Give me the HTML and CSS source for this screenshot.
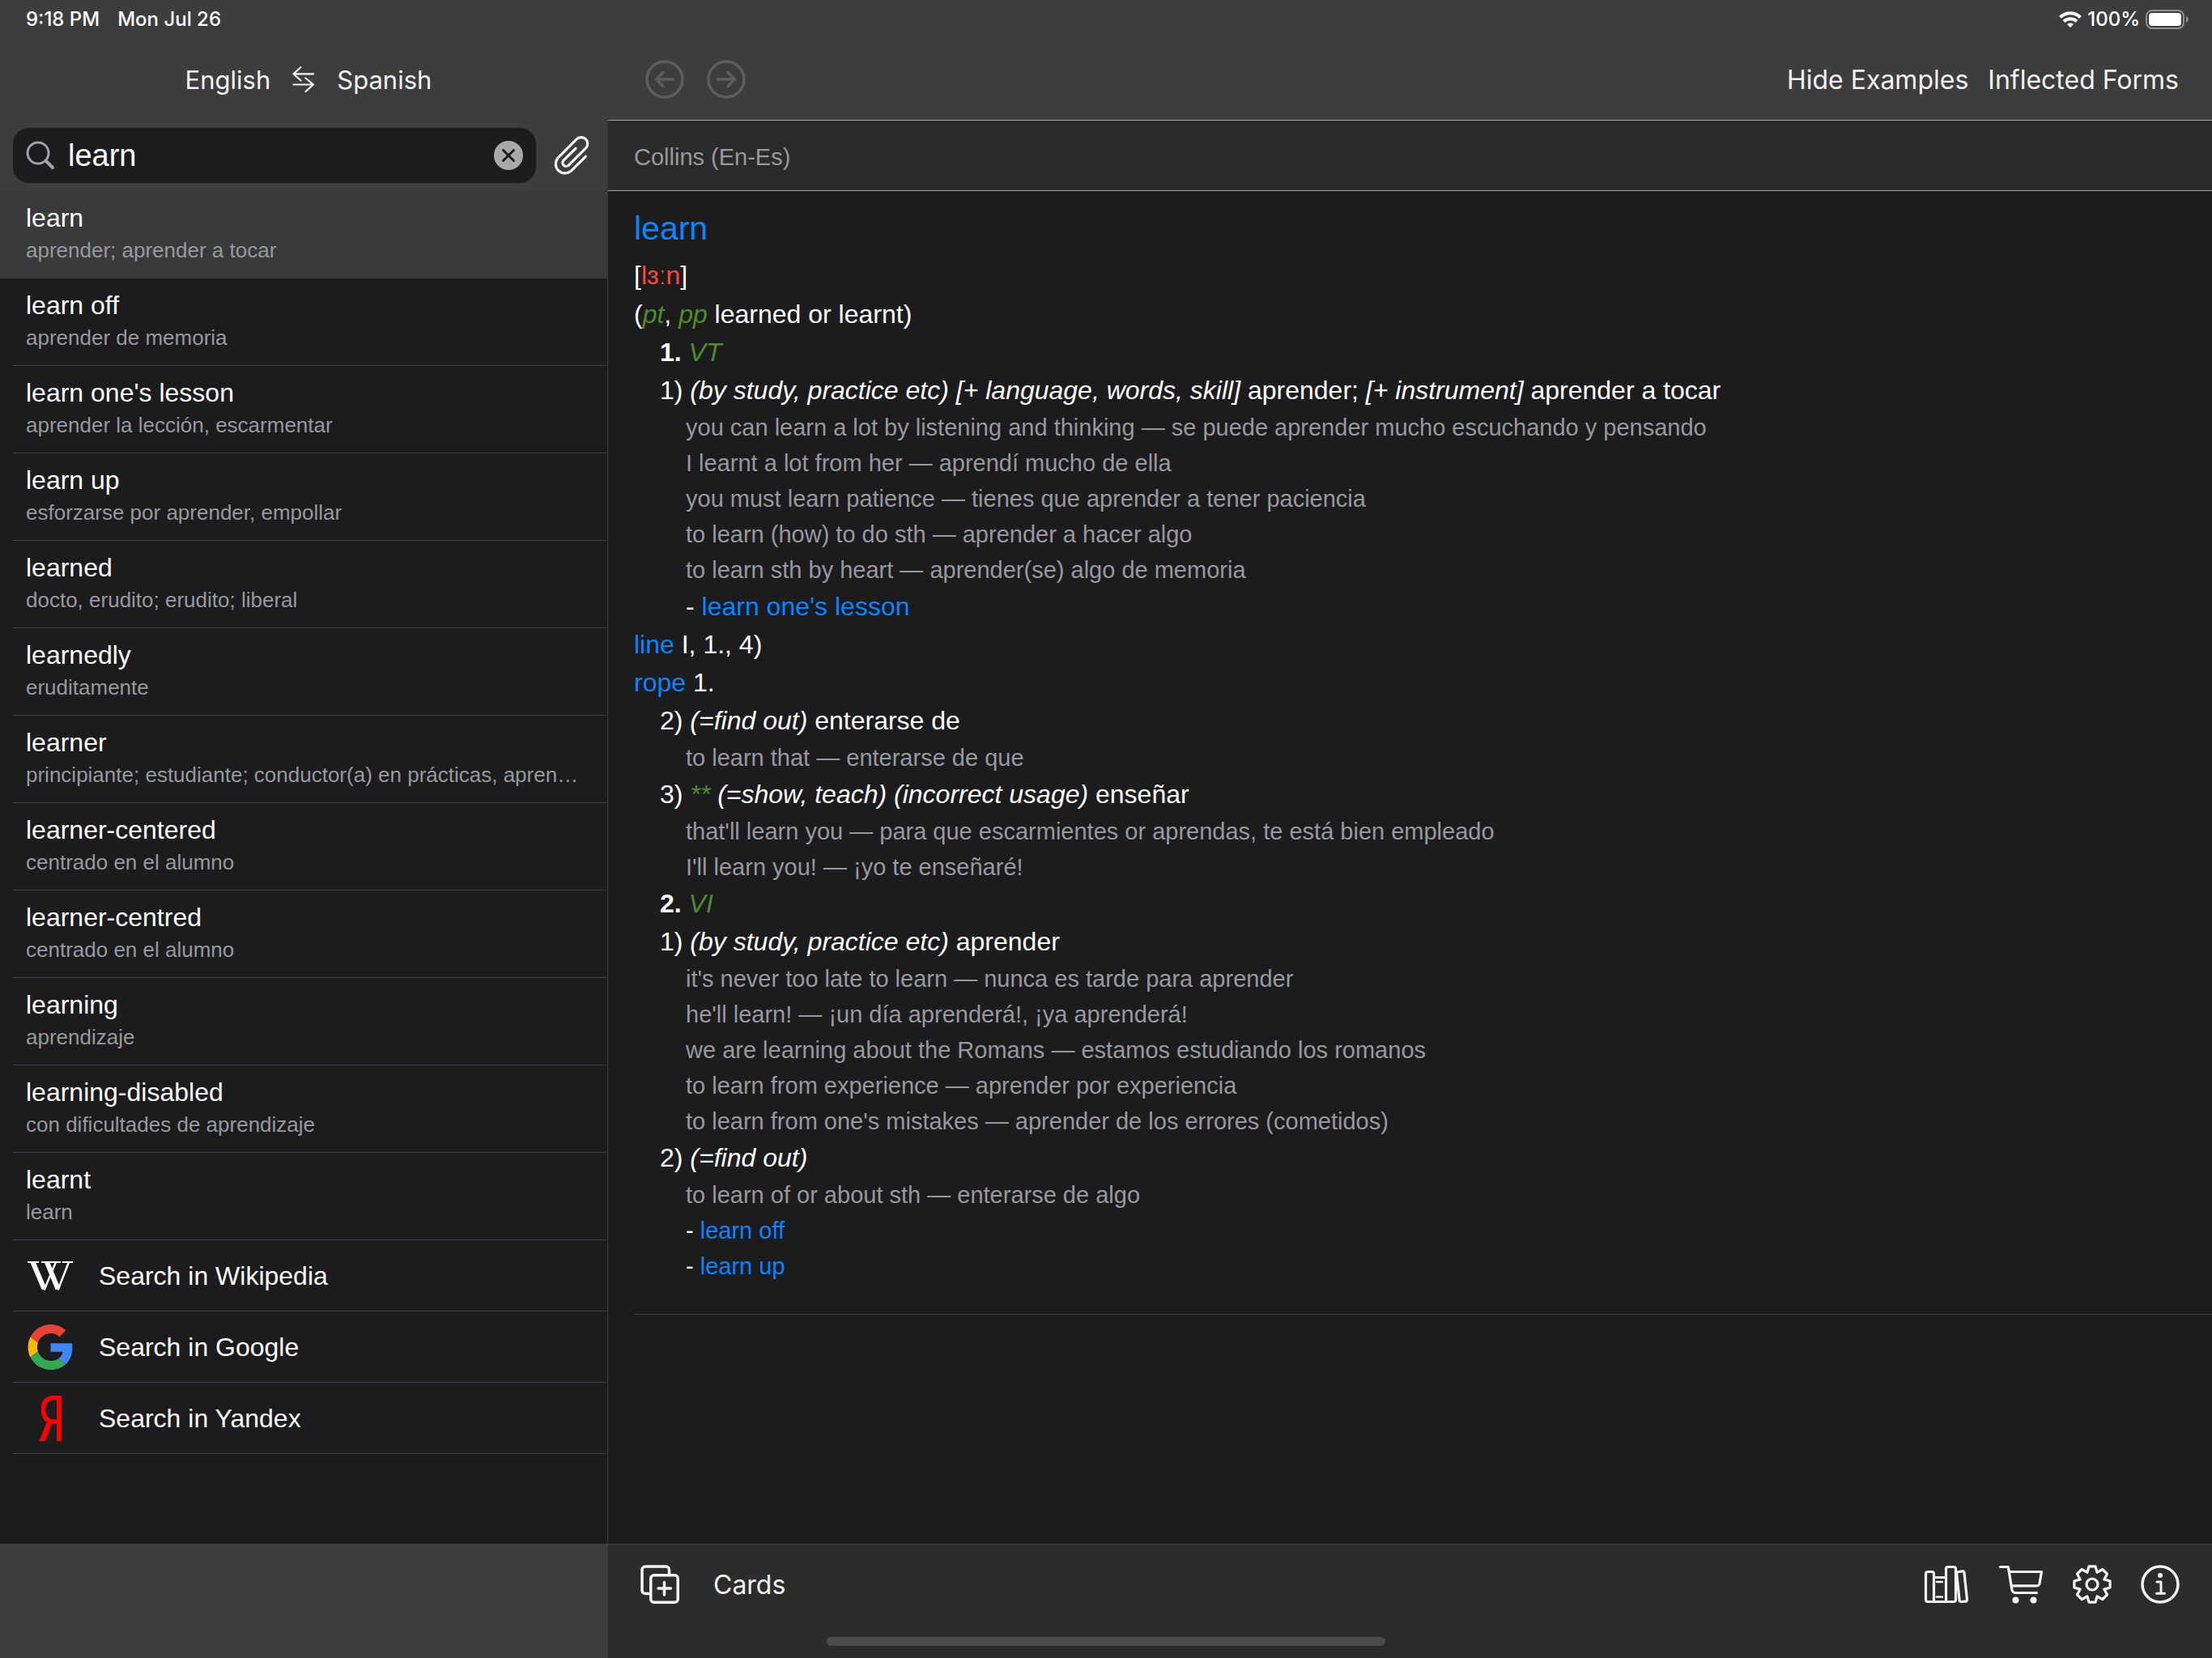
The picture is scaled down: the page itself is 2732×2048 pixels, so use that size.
FILE: index.html
```html
<!DOCTYPE html>
<html lang="en">
<head>
<meta charset="utf-8">
<meta name="viewport" content="width=device-width, initial-scale=1">
<title>learn – English Spanish Dictionary</title>
<link rel="stylesheet" href="styles.css">
</head>
<body>
<div class="app">
  <aside class="sidebar">
    <header class="side-head">
      <div class="status"><span>9:18 PM</span><span>Mon Jul 26</span></div>
      <div class="languages">
        <button class="text-btn" type="button">English</button>
        <button class="icon-btn" type="button" aria-label="Swap languages">
          <svg width="28" height="32" viewBox="0 0 28 32" fill="none" stroke="currentColor" stroke-width="2.2" stroke-linecap="round" stroke-linejoin="round"><path d="M26 9.300H1.500M10.500 1L1.500 9.300L10.500 17.500M1.500 22.500H26M16.500 14.500L26 22.500L16.500 31"/></svg>
        </button>
        <button class="text-btn" type="button">Spanish</button>
      </div>
      <form class="search-row">
        <div class="search-box">
          <svg width="36" height="36" viewBox="0 0 36 36" fill="none" stroke="#a2a2a6" stroke-width="3" stroke-linecap="round"><circle cx="15" cy="15" r="13"/><path d="M24.500 24.500L33 33" stroke-width="4"/></svg>
          <input class="search-input" type="text" value="learn" aria-label="Search word">
          <button class="icon-btn" type="button" aria-label="Clear">
            <svg width="36" height="36" viewBox="0 0 36 36"><circle cx="18" cy="18" r="18" fill="#a9a9a9"/><path d="M11.500 11.500l13 13M24.500 11.500l-13 13" stroke="#1c1c1e" stroke-width="3" stroke-linecap="round"/></svg>
          </button>
        </div>
        <button class="icon-btn" type="button" aria-label="Paste from clipboard">
          <svg width="44" height="48" viewBox="0 0 44 48" fill="none" stroke="currentColor" stroke-width="3.200" stroke-linecap="round" stroke-linejoin="round"><path d="M39.300 25.300L21.200 43.300A11.500 11.500 0 0 1 5 27.100L28.200 3.900A7.900 7.900 0 0 1 39.400 15.100L18.100 36.400A4.400 4.400 0 0 1 11.900 30.200L27 15.300"/></svg>
        </button>
      </form>
    </header>

    <nav class="results" aria-label="Results">
      <a class="entry selected" href="#learn"><span class="word">learn</span><span class="gloss">aprender; aprender a tocar</span></a>
      <a class="entry" href="#learn-off"><span class="word">learn off</span><span class="gloss">aprender de memoria</span></a>
      <a class="entry" href="#lesson"><span class="word">learn one's lesson</span><span class="gloss">aprender la lección, escarmentar</span></a>
      <a class="entry" href="#learn-up"><span class="word">learn up</span><span class="gloss">esforzarse por aprender, empollar</span></a>
      <a class="entry" href="#learned"><span class="word">learned</span><span class="gloss">docto, erudito; erudito; liberal</span></a>
      <a class="entry" href="#learnedly"><span class="word">learnedly</span><span class="gloss">eruditamente</span></a>
      <a class="entry" href="#learner"><span class="word">learner</span><span class="gloss">principiante; estudiante; conductor(a) en prácticas, apren…</span></a>
      <a class="entry" href="#learner-centered"><span class="word">learner-centered</span><span class="gloss">centrado en el alumno</span></a>
      <a class="entry" href="#learner-centred"><span class="word">learner-centred</span><span class="gloss">centrado en el alumno</span></a>
      <a class="entry" href="#learning"><span class="word">learning</span><span class="gloss">aprendizaje</span></a>
      <a class="entry" href="#learning-disabled"><span class="word">learning-disabled</span><span class="gloss">con dificultades de aprendizaje</span></a>
      <a class="entry" href="#learnt"><span class="word">learnt</span><span class="gloss">learn</span></a>
      <a class="web" href="#wikipedia">
        <svg width="56" height="56" viewBox="0 0 56 56" fill="none" stroke="#fff"><path d="M6.500 11L20.500 44M24 11L37.500 44" stroke-width="6"/><path d="M20.500 45.500L35 11M37.500 45.500L51 11" stroke-width="2.500"/><path d="M0 11h14M17 11h14M31 11h10M43 11h13" stroke-width="2"/></svg>
        <span>Search in Wikipedia</span>
      </a>
      <a class="web" href="#google">
        <svg width="56" height="56" viewBox="-0.5 0 48 48"><path fill="#ea4335" d="M24 9.500c3.540 0 6.710 1.220 9.210 3.600l6.850-6.850C35.900 2.380 30.470 0 24 0 14.620 0 6.510 5.380 2.560 13.220l7.980 6.190C12.430 13.720 17.740 9.500 24 9.500z"/><path fill="#4285f4" d="M46.980 24.550c0-1.570-.150-3.090-.380-4.550H24v9.020h12.940c-.580 2.960-2.260 5.480-4.780 7.180l7.730 6c4.510-4.180 7.090-10.360 7.090-17.650z"/><path fill="#fbbc05" d="M10.530 28.590c-.480-1.450-.760-2.990-.760-4.590s.270-3.140.760-4.590l-7.980-6.190C.920 16.460 0 20.120 0 24c0 3.880.920 7.540 2.560 10.780l7.970-6.190z"/><path fill="#34a853" d="M24 48c6.480 0 11.930-2.130 15.890-5.810l-7.730-6c-2.150 1.450-4.920 2.300-8.160 2.300-6.260 0-11.570-4.220-13.470-9.910l-7.980 6.190C6.510 42.620 14.620 48 24 48z"/></svg>
        <span>Search in Google</span>
      </a>
      <a class="web" href="#yandex">
        <svg width="56" height="56" viewBox="0 0 56 56" fill="none" stroke="#f00"><path d="M39 0V56" stroke-width="6"/><path d="M39 2.500H33C23 2.500 19.500 8.500 19.500 17S23 32 33 32H39" stroke-width="5.500"/><path d="M24.500 31l6 3L21.700 56h-7.400z" fill="#f00" stroke="none"/></svg>
        <span>Search in Yandex</span>
      </a>
    </nav>
    <div class="side-foot"></div>
  </aside>

  <main class="main">
    <header class="main-head">
      <div class="status right">
        <svg width="28" height="20" viewBox="0 0 28 20" fill="none" stroke="#fff" stroke-width="4"><path d="M1.500 7.500C8.500.500 19.500.500 26.500 7.500M6 12.500c4.500-4.300 11.500-4.300 16 0"/><path fill="#fff" stroke="none" d="M14 20l-4-4c2-2 6-2 8 0z"/></svg>
        <span>100%</span>
        <svg width="54" height="26" viewBox="0 0 54 26"><rect x="1" y="2" width="46" height="22" rx="7" fill="none" stroke="#8f8f8f" stroke-width="2"/><rect x="4" y="5" width="40" height="16" rx="4" fill="#fff"/><path d="M50 9q3 1.500 3 4t-3 4z" fill="#8f8f8f"/></svg>
      </div>
      <div class="toolbar">
        <div class="history">
          <button class="icon-btn" type="button" aria-label="Back" disabled>
            <svg width="48" height="48" viewBox="0 0 48 48" fill="none" stroke="#5d5d5d" stroke-width="3.500" stroke-linecap="round" stroke-linejoin="round"><circle cx="24" cy="24" r="22"/><path d="M34.500 24H14M22 15.500L13.500 24l8.500 8.500"/></svg>
          </button>
          <button class="icon-btn" type="button" aria-label="Forward" disabled>
            <svg width="48" height="48" viewBox="0 0 48 48" fill="none" stroke="#5d5d5d" stroke-width="3.500" stroke-linecap="round" stroke-linejoin="round"><circle cx="24" cy="24" r="22"/><path d="M13.500 24H34M26 15.500l8.500 8.500-8.500 8.500"/></svg>
          </button>
        </div>
        <div class="actions">
          <button class="text-btn" type="button">Hide Examples</button>
          <button class="text-btn" type="button">Inflected Forms</button>
        </div>
      </div>
    </header>
    <div class="source">Collins (En-Es)</div>

    <div class="content">
      <article class="article">
        <h1 class="headword">learn</h1>
        <p class="line pron">[<span class="ipa">lɜːn</span>]</p>
        <p class="line">(<i class="gram">pt</i>, <i class="gram">pp</i> learned or learnt)</p>
        <p class="line in1"><b>1.</b> <i class="gram">VT</i></p>
        <p class="line in1">1) <i>(by study, practice etc) [+ language, words, skill]</i> aprender; <i>[+ instrument]</i> aprender a tocar</p>
        <p class="example">you can learn a lot by listening and thinking — se puede aprender mucho escuchando y pensando</p>
        <p class="example">I learnt a lot from her — aprendí mucho de ella</p>
        <p class="example">you must learn patience — tienes que aprender a tener paciencia</p>
        <p class="example">to learn (how) to do sth — aprender a hacer algo</p>
        <p class="example">to learn sth by heart — aprender(se) algo de memoria</p>
        <p class="line in2">- <a href="#lesson">learn one's lesson</a></p>
        <p class="line"><a href="#line">line</a> I, 1., 4)</p>
        <p class="line"><a href="#rope">rope</a> 1.</p>
        <p class="line in1">2) <i>(=find out)</i> enterarse de</p>
        <p class="example">to learn that — enterarse de que</p>
        <p class="line in1">3) <i class="gram">**</i> <i>(=show, teach) (incorrect usage)</i> enseñar</p>
        <p class="example">that'll learn you — para que escarmientes or aprendas, te está bien empleado</p>
        <p class="example">I'll learn you! — ¡yo te enseñaré!</p>
        <p class="line in1"><b>2.</b> <i class="gram">VI</i></p>
        <p class="line in1">1) <i>(by study, practice etc)</i> aprender</p>
        <p class="example">it's never too late to learn — nunca es tarde para aprender</p>
        <p class="example">he'll learn! — ¡un día aprenderá!, ¡ya aprenderá!</p>
        <p class="example">we are learning about the Romans — estamos estudiando los romanos</p>
        <p class="example">to learn from experience — aprender por experiencia</p>
        <p class="example">to learn from one's mistakes — aprender de los errores (cometidos)</p>
        <p class="line in1">2) <i>(=find out)</i></p>
        <p class="example">to learn of or about sth — enterarse de algo</p>
        <p class="example phrasal">- <a href="#learn-off">learn off</a></p>
        <p class="example phrasal">- <a href="#learn-up">learn up</a></p>
      </article>
    </div>

    <footer class="main-foot">
      <button class="cards" type="button">
        <svg width="48" height="48" viewBox="0 0 48 48" fill="none" stroke="currentColor" stroke-width="3.500" stroke-linecap="round" stroke-linejoin="round"><rect x="12.750" y="12.750" width="33.500" height="33.500" rx="4"/><path d="M35.500 12V6a4 4 0 0 0-4-4H6a4 4 0 0 0-4 4v25.500a4 4 0 0 0 4 4h6M29.500 21.500v15.500M22 29h15.500"/></svg>
        <span>Cards</span>
      </button>
      <div class="tools">
        <button class="icon-btn" type="button" aria-label="Dictionaries">
          <svg width="56" height="48" viewBox="-1 0 56 48" fill="none" stroke="currentColor" stroke-width="3.200" stroke-linejoin="round" stroke-linecap="round"><path d="M11.500 45.500H4a2.500 2.500 0 0 1-2.500-2.500V11A2.500 2.500 0 0 1 4 8.500h5a2.500 2.500 0 0 1 2.500 2.500zM11.500 15.500h15M11.500 45.500h15M29 2.500h7a2.500 2.500 0 0 1 2.500 2.500v38a2.500 2.500 0 0 1-2.500 2.500h-9.500V5A2.500 2.500 0 0 1 29 2.500z"/><path d="M15 21h7M15 39.500h7" stroke-width="2.500"/><path d="M39.500 9l7-1.200a2 2 0 0 1 2.500 2l3.500 33a2 2 0 0 1-2 2.300l-5 .400a2.500 2.500 0 0 1-2.500-2.500z"/></svg>
        </button>
        <button class="icon-btn" type="button" aria-label="Store">
          <svg width="56" height="48" viewBox="-1 0 56 48" fill="none" stroke="currentColor" stroke-width="3.200" stroke-linejoin="round" stroke-linecap="round"><path d="M1.500 2.500h9.800L16 31q.800 3.500 4.500 3.500H46.500M12.800 8.500H52.500L50 23q-.600 2.800-3.500 2.800H16"/><circle cx="20.500" cy="43.500" r="4" fill="currentColor" stroke="none"/><circle cx="42.500" cy="43.500" r="4" fill="currentColor" stroke="none"/></svg>
        </button>
        <button class="icon-btn" type="button" aria-label="Settings">
          <svg width="48" height="48" viewBox="0 0 48 48" fill="none" stroke="currentColor" stroke-width="3.200" stroke-linejoin="round"><path d="M20 1.900L28 1.900L30.100 9.200L36.800 5.500L42.500 11.200L38.800 17.900L46.100 20L46.100 28L38.800 30.100L42.500 36.800L36.800 42.500L30.100 38.800L28 46.100L20 46.100L17.900 38.800L11.200 42.500L5.500 36.800L9.200 30.100L1.900 28L1.900 20L9.200 17.900L5.500 11.200L11.200 5.500L17.900 9.200z"/><circle cx="24" cy="24" r="7"/></svg>
        </button>
        <button class="icon-btn" type="button" aria-label="Information">
          <svg width="48" height="48" viewBox="0 0 48 48" fill="none" stroke="currentColor" stroke-width="3.500" stroke-linecap="round" stroke-linejoin="round"><circle cx="24" cy="24" r="22"/><path d="M20 21h5v14M19.500 35.300h10" stroke-width="3"/><circle cx="24" cy="13" r="3" fill="currentColor" stroke="none"/></svg>
        </button>
      </div>
    </footer>
  </main>
  <div class="home-indicator"></div>
</div>
</body>
</html>
```

FILE: styles.css
```css
* { box-sizing: border-box; }

body {
  margin: 0;
  background: #1c1c1e;
  color: #fff;
  font-family: "Liberation Sans", Arial, sans-serif;
  font-size: 32px;
}

a { color: #0a84ff; text-decoration: none; }
svg { display: block; flex: none; }
p, h1 { margin: 0; }

button {
  border: 0;
  padding: 0;
  background: none;
  color: #f4f4f4;
}

.text-btn,
.cards {
  font: 400 32px/40px Inter, sans-serif;
}

.text-btn,
.cards span { padding-top: 2px; }

.app {
  position: relative;
  display: grid;
  grid-template-columns: 751px 1fr;
  min-height: 100vh;
}

.sidebar {
  display: flex;
  flex-direction: column;
  border-right: 1px solid #39393b;
  min-width: 0;
}

.side-head { background: #3d3d3d; height: 236px; }

.status {
  display: flex;
  align-items: center;
  gap: 22px;
  height: 48px;
  padding-left: 32px;
  font: 500 24px/48px Inter, sans-serif;
}

.status.right {
  justify-content: flex-end;
  gap: 7px;
  padding: 0 28px 0 0;
}

.languages {
  display: flex;
  align-items: center;
  justify-content: center;
  gap: 27px;
  height: 100px;
  padding-left: 12px;
}

.languages .text-btn { font-size: 31px; }

.search-row {
  display: flex;
  align-items: center;
  gap: 22px;
  padding: 10px 22px 10px 16px;
}

.search-box {
  display: flex;
  flex: 1;
  align-items: center;
  gap: 16px;
  height: 68px;
  padding: 0 16px;
  border-radius: 20px;
  background: #1c1c1e;
}

.search-input {
  flex: 1;
  min-width: 0;
  padding: 0;
  border: 0;
  outline: 0;
  background: none;
  color: #fff;
  font: 38px/48px "Liberation Sans", Arial, sans-serif;
}

.results { flex: 1; }

.entry,
.web {
  position: relative;
  display: flex;
  color: #fff;
}

.entry::after,
.web::after {
  content: "";
  position: absolute;
  right: 0;
  bottom: 0;
  left: 16px;
  height: 1px;
  background: #3d3d41;
}

.entry {
  flex-direction: column;
  height: 108px;
  padding: 13px 32px 0;
}

.entry.selected { background: #3a3a3c; }
.entry.selected::after { background: #3a3a3c; }

.word,
.gloss {
  line-height: 40px;
  white-space: nowrap;
}

.gloss { color: #98989f; font-size: 26px; }

.web {
  align-items: center;
  gap: 32px;
  height: 88px;
  padding-left: 34px;
}

.side-foot { height: 141px; background: #3d3d3d; }

.main { display: flex; flex-direction: column; min-width: 0; }

.main-head {
  height: 149px;
  border-bottom: 1px solid #a5a5a8;
  background: #3d3d3d;
}

.toolbar {
  display: flex;
  align-items: center;
  justify-content: space-between;
  height: 100px;
  padding: 0 41px 0 46px;
}

.history,
.actions { display: flex; }
.history { gap: 28px; }
.actions { gap: 24px; }

.source {
  height: 87px;
  padding-left: 32px;
  border-bottom: 1px solid #a5a5a8;
  background: #2a2a2a;
  color: #98989f;
  font-size: 29px;
  line-height: 90px;
}

.content { flex: 1; padding-left: 32px; }

.article {
  padding: 16px 0 37px;
  border-bottom: 1px solid #3d3d41;
}

.headword {
  margin-bottom: 4px;
  color: #0a84ff;
  font-size: 41px;
  font-weight: 400;
  line-height: 60px;
}

.line { line-height: 47px; }
.line.pron { line-height: 49px; }
.in1 { padding-left: 32px; }
.in2 { padding-left: 64px; }

.example {
  padding-left: 64px;
  color: #98989f;
  font-size: 29px;
  line-height: 44px;
}

.example.phrasal { color: #fff; }
.ipa { color: #ff453a; }
.gram { color: #4e8c2c; }

.main-foot {
  display: flex;
  justify-content: space-between;
  height: 141px;
  padding: 25px 40px 0;
  border-top: 1px solid #3d3d3f;
  background: #2c2c2c;
}

.cards {
  display: flex;
  align-items: center;
  gap: 42px;
  height: 48px;
}

.tools { display: flex; gap: 36px; }
.tools .icon-btn { height: 48px; }

.home-indicator {
  position: absolute;
  bottom: 15px;
  left: 50%;
  width: 690px;
  height: 11px;
  margin-left: -345px;
  border-radius: 6px;
  background: #4a4a4a;
}
```
